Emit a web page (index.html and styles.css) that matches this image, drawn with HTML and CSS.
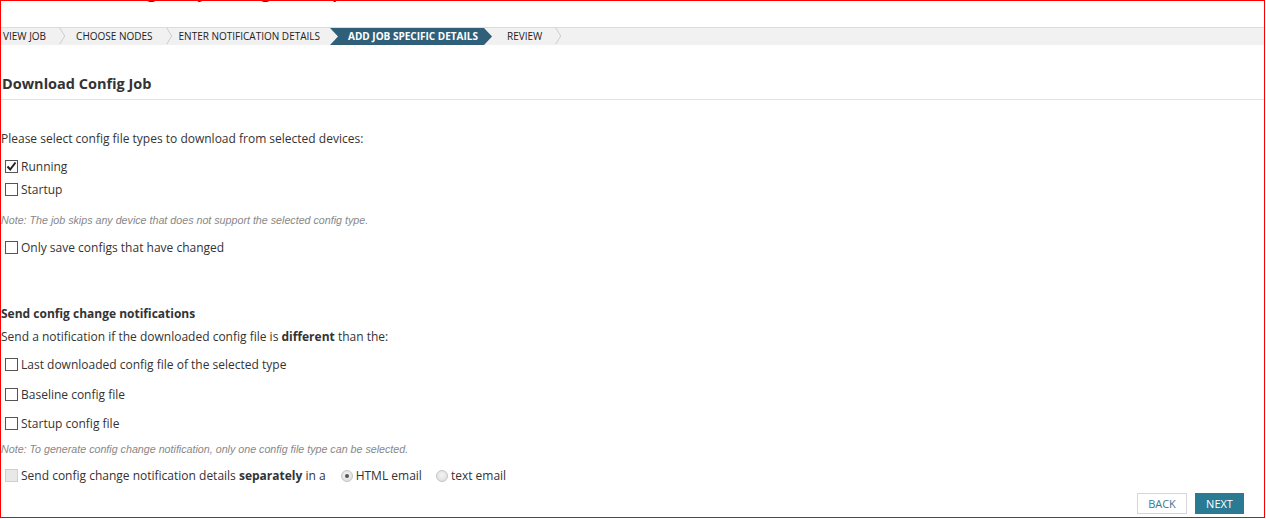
FILE: index.html
```html
<!DOCTYPE html>
<html>
<head>
<meta charset="utf-8">
<link rel="stylesheet" href="styles.css">
</head>
<body>
<div class="frame">
  <div class="title-clip"><h1 class="title">Adding Daily Config Backup</h1></div>
  <nav class="steps">
    <span class="step">View Job</span><span class="chev"></span>
    <span class="step">Choose Nodes</span><span class="chev"></span>
    <span class="step">Enter Notification Details</span>
    <span class="step active">Add Job Specific Details</span>
    <span class="step">Review</span><span class="chev"></span>
  </nav>
  <h2 class="heading">Download Config Job</h2>
  <div class="content">
    <p class="intro">Please select config file types to download from selected devices:</p>
    <label class="opt first"><span class="cb checked"><svg viewBox="0 0 13 13" width="13" height="13"><path d="M2.5 6.5 L5.2 9.5 L10.5 2.5" fill="none" stroke="#222" stroke-width="2"/></svg></span>Running</label>
    <label class="opt"><span class="cb"></span>Startup</label>
    <p class="note n1">Note: The job skips any device that does not support the selected config type.</p>
    <label class="opt"><span class="cb"></span>Only save configs that have changed</label>

    <h3 class="sub">Send config change notifications</h3>
    <p class="intro2">Send a notification if the downloaded config file is <b>different</b> than the:</p>
    <label class="opt o2 first2"><span class="cb"></span>Last downloaded config file of the selected type</label>
    <label class="opt o2"><span class="cb"></span>Baseline config file</label>
    <label class="opt o2"><span class="cb"></span>Startup config file</label>
    <p class="note n2">Note: To generate config change notification, only one config file type can be selected.</p>
    <div class="opt last">
      <span class="cb disabled"></span>Send config change notification details <b>&nbsp;separately&nbsp;</b> in a
      <span class="radio on"></span>HTML email
      <span class="radio"></span>text email
    </div>
  </div>
  <div class="actions">
    <button class="btn back">BACK</button>
    <button class="btn next">NEXT</button>
  </div>
</div>
</body>
</html>
```
FILE: styles.css
```css
* { box-sizing: border-box; }
html, body { margin: 0; padding: 0; background: #fff; }
body { font-family: "Open Sans", "Liberation Sans", sans-serif; color: #333; }
.frame {
  width: 1265px; height: 518px;
  border: 1px solid #f00;
  position: relative;
  overflow: hidden;
}
.title-clip { height: 3px; overflow: hidden; padding-left: 92px; }
.title {
  margin: -26px 0 0 0;
  font-size: 19px; line-height: 30px; font-weight: 600; color: #333;
  white-space: nowrap;
}
.steps {
  margin-top: 23px;
  height: 18px;
  border-top: 1px solid #dcdcdc;
  background: #f1f1f1;
  display: flex; align-items: center;
  font-size: 10px; text-transform: uppercase; color: #222;
  white-space: nowrap;
}
.step { padding: 0 0 0 2px; line-height: 17px; }
.step:nth-child(3) { margin-left: 8px; }
.step:nth-child(5) { margin-left: 4px; }
.chev {
  width: 8px; height: 17px; margin-left: 12px;
  position: relative;
}
.chev::before {
  content: ""; position: absolute; left: -4px; top: 2px;
  width: 11px; height: 11px;
  border-right: 1px solid #c8c8c8; border-top: 1px solid #c8c8c8;
  transform: scaleX(0.6) rotate(45deg);
}
.step.active {
  margin-left: 10px;
  background: #2f5f79; color: #fff; font-weight: 700;
  padding: 0 14px 0 18px; height: 17px;
  clip-path: polygon(0 0, calc(100% - 8px) 0, 100% 50%, calc(100% - 8px) 100%, 0 100%, 8px 50%);
  width: 162px;
}
.step.active + .step { margin-left: 13px; }
.heading {
  margin: 30px 0 0 0;
  padding: 0 0 6px 1px;
  font-size: 14.5px; line-height: 18px; font-weight: 700; color: #333;
  border-bottom: 1px solid #e2e2e2;
}
.content { padding: 0; font-size: 12px; }
p { margin: 0; }
.intro { margin-top: 30px; line-height: 17px; }
.opt { display: flex; align-items: center; line-height: 17px; white-space: nowrap; }
.first { margin-top: 11px; }
.opt + .opt { margin-top: 6px; }
.cb {
  display: inline-block; width: 13px; height: 13px;
  border: 1px solid #555; background: #fff;
  margin: 0 3px 0 4px; flex: none;
}
.cb svg { display: block; margin: -1px; }
.cb.disabled { border-color: #cfcfcf; background: #e8e8e8; }
.note {
  font-family: "Liberation Sans", Arial, sans-serif; font-style: italic;
  font-size: 10.7px; color: #888; line-height: 14px;
}
.n1 { margin-top: 15px; }
.n1 + .opt { margin-top: 12px; }
.sub { margin: 49px 0 0 0; font-size: 12px; line-height: 17px; font-weight: 700; }
.intro2 { margin-top: 6px; line-height: 17px; }
.intro2 b { font-weight: 700; }
.first2 { margin-top: 11px; }
.o2 + .o2 { margin-top: 13px; }
.o2 + .o2 + .o2 { margin-top: 12px; }
.n2 { margin-top: 10px; }
.last { margin-top: 11px; }
.last b { font-weight: 700; white-space: pre; }
.radio {
  display: inline-block; width: 12px; height: 12px; border-radius: 50%;
  border: 1px solid #c4c4c4;
  background: radial-gradient(circle at 50% 40%, #f4f4f4, #dadada);
  margin: 0 3px 0 15px; position: relative;
}
.radio.on::after {
  content: ""; position: absolute; left: 3px; top: 3px;
  width: 4px; height: 4px; border-radius: 50%; background: #555;
}
.radio + .radio { margin-left: 14px; }
.actions {
  position: absolute; right: 20px; bottom: 3px;
  display: flex; gap: 8px;
}
.btn {
  height: 21px; width: 50px;
  font-family: "Open Sans", "Liberation Sans", sans-serif; font-size: 11px;
  border: 1px solid #d6d6d6; background: #fff; color: #3b7890;
  padding: 0;
}
.btn.next { background: #2b7a93; border-color: #2b7a93; color: #fff; width: 49px; }
```
